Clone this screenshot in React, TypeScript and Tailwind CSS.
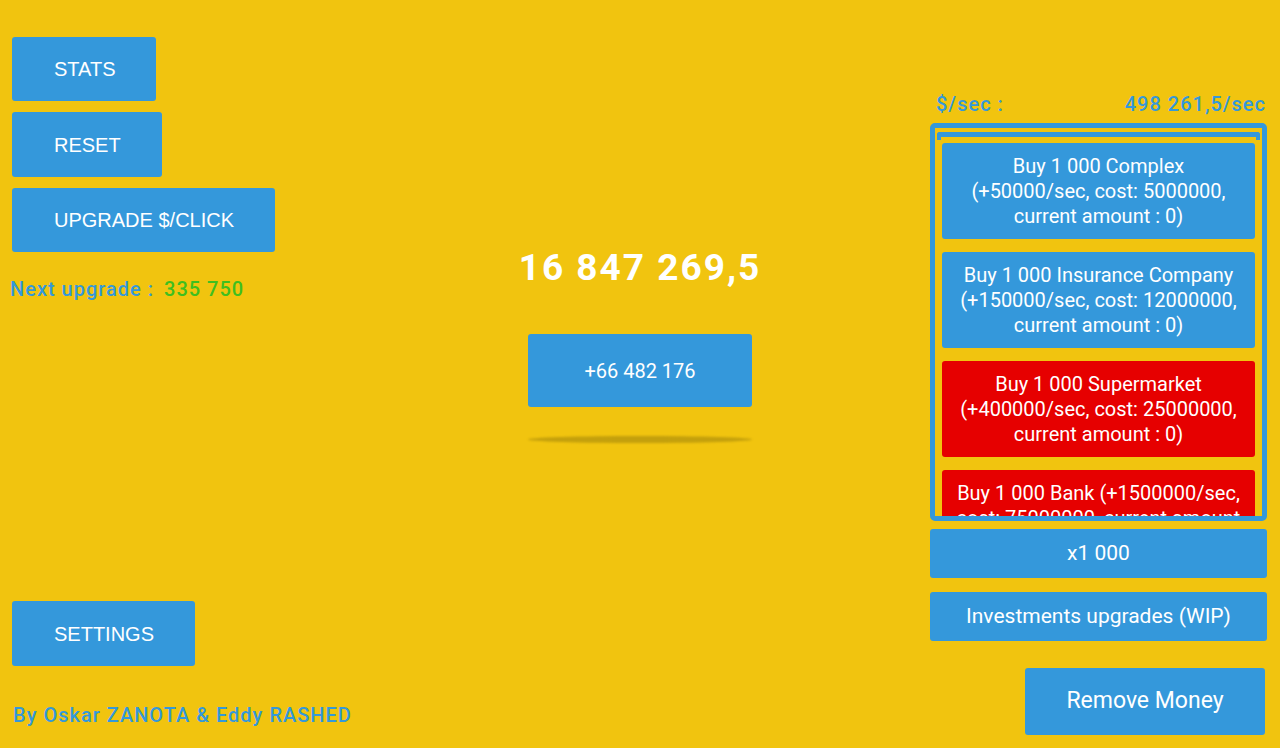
import React from 'react';

const roboto = { fontFamily: 'Roboto, "Noto Sans", sans-serif' };
const arial = { fontFamily: '"Liberation Sans", Arial, sans-serif' };

interface Investment {
  lines: string[];
  affordable: boolean;
}

// Investment list shown in the scroll box
const investments: Investment[] = [
  { lines: ['Buy 1 000 Complex', '(+50000/sec, cost: 5000000,', 'current amount : 0)'], affordable: true },
  { lines: ['Buy 1 000 Insurance Company', '(+150000/sec, cost: 12000000,', 'current amount : 0)'], affordable: true },
  { lines: ['Buy 1 000 Supermarket', '(+400000/sec, cost: 25000000,', 'current amount : 0)'], affordable: false },
  { lines: ['Buy 1 000 Bank (+1500000/sec,', 'cost: 75000000, current amount', ': 0)'], affordable: false },
];

function MenuButton({ label, className = '' }: { label: string; className?: string }) {
  return (
    <button
      style={arial}
      className={`h-[64px] px-[42px] bg-[#3498db] text-white text-[20px] rounded-[3px] text-left whitespace-nowrap ${className}`}
    >
      {label}
    </button>
  );
}

export default function App() {
  return (
    <div className="w-[1280px] h-[748px] bg-[#f1c40f] flex overflow-hidden" style={roboto}>
      {/* Left menu */}
      <div className="w-[350px] shrink-0 flex flex-col items-start pl-[12px] pt-[37px] pb-[21px]">
        <MenuButton label="STATS" className="w-[144px]" />
        <MenuButton label="RESET" className="w-[150px] h-[65px] mt-[11px]" />
        <MenuButton label="UPGRADE $/CLICK" className="w-[263px] mt-[11px]" />
        <div className="mt-[25px] -ml-[2px] text-[20px] leading-[24px] font-medium tracking-[1px] flex gap-[10px] whitespace-nowrap">
          <span className="text-[#3498db]">Next upgrade :</span>
          <span className="text-[#3fbf1f]">335 750</span>
        </div>
        <div className="flex-1" />
        <MenuButton label="SETTINGS" className="w-[183px] h-[65px]" />
        <div className="mt-[37px] ml-[1px] text-[20px] leading-[24px] font-medium tracking-[1px] text-[#3498db] whitespace-nowrap">
          By Oskar ZANOTA &amp; Eddy RASHED
        </div>
      </div>

      {/* Center clicker */}
      <div className="flex-1 flex flex-col items-center pt-[245px]">
        <div className="text-white font-bold text-[37px] leading-[46px] tracking-[2px]">16 847 269,5</div>
        <button className="mt-[43px] w-[224px] h-[73px] bg-[#3498db] text-white text-[20px] rounded-[3px]">
          +66 482 176
        </button>
        <div className="mt-[29px] w-[224px] h-[7px] rounded-[50%] bg-[#c4a00c] blur-[1px]" />
      </div>

      {/* Right investments */}
      <div className="w-[337px] shrink-0 mr-[13px] flex flex-col pt-[92px]">
        <div className="flex justify-between pl-[6px] pr-[1px] text-[20px] leading-[24px] font-medium tracking-[1px] text-[#3498db]">
          <span>$/sec :</span>
          <span>498 261,5/sec</span>
        </div>
        <div className="mt-[7px] h-[398px] border-[5px] border-[#3498db] rounded-[5px] overflow-hidden">
          <div className="pt-[4px] px-[2px]">
            <div className="h-[8px] border-t-[5px] border-x-[4px] border-[#3498db] rounded-t-[3px]" />
          </div>
          <div className="flex flex-col gap-[13px] pt-[3px] px-[7px]">
            {investments.map((inv, i) => (
              <button
                key={i}
                className={`${inv.affordable ? 'bg-[#3498db]' : 'bg-[#e60000]'} h-[96px] shrink-0 text-white text-[20px] leading-[25px] rounded-[3px] px-[8px] flex flex-col items-center justify-center`}
              >
                {inv.lines.map((l, j) => (
                  <span key={j} className="whitespace-nowrap">{l}</span>
                ))}
              </button>
            ))}
          </div>
        </div>
        <button className="mt-[8px] h-[49px] bg-[#3498db] text-white text-[21px] rounded-[3px]">x1 000</button>
        <button className="mt-[14px] h-[49px] bg-[#3498db] text-white text-[21px] rounded-[3px]">
          Investments upgrades (WIP)
        </button>
        <button className="mt-[27px] self-end mr-[2px] w-[240px] h-[67px] bg-[#3498db] text-white text-[23px] rounded-[3px]">
          Remove Money
        </button>
      </div>
    </div>
  );
}
